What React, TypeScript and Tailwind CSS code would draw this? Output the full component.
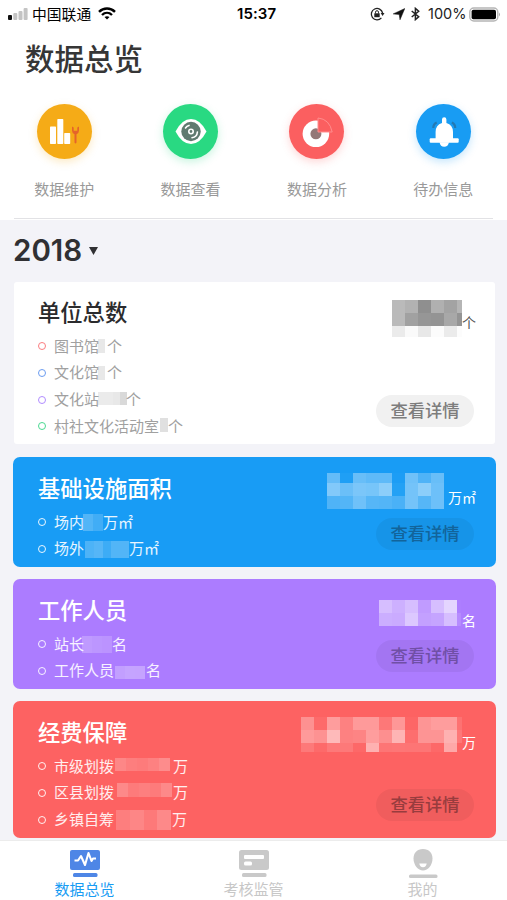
import type { ReactNode } from "react";

type Censor = {
  cells: number[][];
  cols: number[];
  rows: number[];
};

type Item = {
  label: string;
  unit: string;
  before: number;
  after: number;
  top?: number;
  mask: Censor;
};

type Card = {
  title: string;
  unit: string;
  height: string;
  box: string;
  titleColor: string;
  textColor: string;
  unitColor: string;
  button: string;
  side: string;
  dots: string[];
  maskTop: number;
  maskRight: number;
  unitTop: number;
  mask: Censor;
  items: Item[];
};

const row = (cells: number[], width: number, height: number): Censor => ({
  cells: [cells],
  cols: cells.map(() => width / cells.length),
  rows: [height],
});

const cards: Card[] = [
  {
    title: "单位总数",
    unit: "个",
    height: "h-[162px] mb-[13px]",
    box: "mx-[14px] w-[481px] rounded-[3px] bg-white pl-6 pt-[13px] text-black",
    titleColor: "text-[#2b2b2d]",
    textColor: "text-[#a0a0a0]",
    unitColor: "text-[#555]",
    button: "bg-[#f1f1f1] text-[#7d7d7d]",
    side: "-mt-[13px] pr-[19px]",
    dots: ["border-[#fb7d80]", "border-[#6b9cf0]", "border-[#b18cff]", "border-[#4bd992]"],
    maskTop: 18,
    maskRight: 0,
    unitTop: 30,
    mask: {
      cols: [13, 13, 13, 13, 13, 5],
      rows: [13, 13, 11],
      cells: [
        [0.27, 0.3, 0.44, 0.31, 0.36, 0.29],
        [0.27, 0.37, 0.41, 0.42, 0.34, 0.42],
        [0.08, 0.02, 0.09, 0.01, 0.08, 0.01],
      ],
    },
    items: [
      { label: "图书馆", unit: "个", before: -1, after: 2, mask: row([0.09], 7, 14) },
      { label: "文化馆", unit: "个", before: -1, after: 2, mask: row([0.09], 7, 14) },
      { label: "文化站", unit: "个", before: -1, after: -1, top: -1, mask: row([0.08, 0.08, 0.09, 0.15], 29, 13) },
      { label: "村社文化活动室", unit: "个", before: 1, after: 0, top: -1, mask: row([0.12], 8, 14) },
    ],
  },
  {
    title: "基础设施面积",
    unit: "万㎡",
    height: "h-[110px] mb-3",
    box: "mx-[13px] w-[483px] rounded-[7px] bg-[#189cf5] pl-[25px] pt-[14px] text-white",
    titleColor: "text-white",
    textColor: "text-white/90",
    unitColor: "text-white",
    button: "bg-black/5 text-[#12649b]",
    side: "-mt-[14px] pr-5",
    dots: ["border-white/90", "border-white/90"],
    maskTop: 16,
    maskRight: 4,
    unitTop: 30,
    mask: {
      cols: [13, 13, 13, 13, 13, 13, 13, 13, 13],
      rows: [10, 13, 13],
      cells: [
        [0.33, 0.03, 0.35, 0.31, 0.31, 0.02, 0.38, 0.24, 0.35],
        [0.46, 0.36, 0.43, 0.41, 0.5, 0.05, 0.4, 0.5, 0.37],
        [0.24, 0.26, 0.38, 0.27, 0.26, 0.22, 0.4, 0.27, 0.37],
      ],
    },
    items: [
      { label: "场内", unit: "万㎡", before: -1, after: 0, mask: row([0.25, 0.18], 20, 17) },
      { label: "场外", unit: "万㎡", before: 1, after: 0, mask: row([0.23, 0.27, 0.16, 0.25, 0.25], 44, 17) },
    ],
  },
  {
    title: "工作人员",
    unit: "名",
    height: "h-[110px] mb-3",
    box: "mx-[13px] w-[483px] rounded-[7px] bg-[#ac7cff] pl-[25px] pt-[14px] text-white",
    titleColor: "text-white",
    textColor: "text-white/90",
    unitColor: "text-white",
    button: "bg-black/5 text-[#704fa6]",
    side: "-mt-[14px] pr-5",
    dots: ["border-white/90", "border-white/90"],
    maskTop: 21,
    maskRight: 1,
    unitTop: 31,
    mask: {
      cols: [13, 13, 13, 13, 13, 13, 4],
      rows: [13, 13],
      cells: [
        [0.5, 0.4, 0.5, 0.24, 0.5, 0.68, 0.02],
        [0.38, 0.36, 0.58, 0.28, 0.31, 0.5, 0.12],
      ],
    },
    items: [
      { label: "站长", unit: "名", before: -2, after: 0, mask: row([0.23, 0.2, 0.18], 30, 17) },
      { label: "工作人员", unit: "名", before: 1, after: 1, top: 1, mask: row([0.27, 0.31, 0.3], 30, 13) },
    ],
  },
  {
    title: "经费保障",
    unit: "万",
    height: "h-[137px]",
    box: "mx-[13px] w-[483px] rounded-[7px] bg-[#fd6262] pl-[25px] pt-[14px] text-white",
    titleColor: "text-white",
    textColor: "text-white/90",
    unitColor: "text-white",
    button: "bg-black/5 text-[#983c3e]",
    side: "-mt-[14px] pr-5",
    dots: ["border-white/90", "border-white/90", "border-white/90"],
    maskTop: 16,
    maskRight: 0,
    unitTop: 31,
    mask: {
      cols: [13, 13, 13, 13, 13, 13, 13, 13, 13, 13, 13, 13, 5],
      rows: [13, 13, 9],
      cells: [
        [0.3, 0.05, 0.38, 0.2, 0.36, 0.36, 0.14, 0.34, 0.03, 0.33, 0.38, 0.38, 0.1],
        [0.36, 0.31, 0.56, 0.2, 0.22, 0.38, 0.29, 0.52, 0.08, 0.32, 0.32, 0.5, 0.14],
        [0.15, 0.05, 0.15, 0.15, 0.04, 0.5, 0.12, 0.13, 0.12, 0.12, 0.04, 0.45, 0.01],
      ],
    },
    items: [
      { label: "市级划拨", unit: "万", before: 1, after: 3, top: -2, mask: row([0.24, 0.18, 0.16, 0.2, 0.27], 55, 13) },
      { label: "区县划拨", unit: "万", before: 3, after: 1, top: -3, mask: row([0.25, 0.16, 0.19, 0.16, 0.25], 55, 14) },
      { label: "乡镇自筹", unit: "万", before: 2, after: 1, mask: row([0.18, 0.23, 0.15, 0.25], 55, 20) },
    ],
  },
];

// pixelated block that hides a figure
function Mosaic({ mask }: { mask: Censor }) {
  return (
    <div
      className="grid shrink-0"
      style={{
        gridTemplateColumns: mask.cols.map((c) => `${c}px`).join(" "),
        gridTemplateRows: mask.rows.map((r) => `${r}px`).join(" "),
      }}
    >
      {mask.cells.flat().map((opacity, i) => (
        <span key={i} style={{ opacity }} className="bg-current" />
      ))}
    </div>
  );
}

function StatusBar() {
  return (
    <div className="flex h-7 items-center pl-2 pr-[6px] text-black">
      <div className="flex w-[229px] items-center">
        <svg width="20" height="12" viewBox="0 0 20 12">
          <rect x="0" y="7" width="4" height="5" rx="1" fill="#111" />
          <rect x="5.3" y="5" width="4" height="7" rx="1" fill="#c4c4c4" />
          <rect x="10.5" y="3" width="4" height="9" rx="1" fill="#c4c4c4" />
          <rect x="15.6" y="0" width="4" height="12" rx="1" fill="#c4c4c4" />
        </svg>
        <span className="ml-1 text-[14.8px] leading-none">中国联通</span>
        <svg className="ml-[7px]" width="18" height="13" viewBox="0 0 18 13" fill="none" stroke="#000" strokeWidth="2.4">
          <path d="M1 4.8C5.5.3 12.5.3 17 4.8" />
          <path d="M4 8C6.9 5.2 11.1 5.2 14 8" />
          <path d="M6.5 10Q9 8.3 11.5 10L9 12.5Z" fill="#000" stroke="none" />
        </svg>
      </div>
      <span className="-mt-px w-10 font-['Inter'] text-[15px] font-semibold leading-none tracking-[0.1px]">15:37</span>
      <div className="ml-auto flex items-center">
        <svg width="15" height="14" viewBox="0 0 15 14" fill="none" stroke="#222" strokeWidth="1.3">
          <path d="M11.4 10.8A5.7 5.7 0 1 1 12.6 6" />
          <path d="M10.7 6h3.8l-1.9 3z" fill="#222" stroke="none" />
          <rect x="4.3" y="6.3" width="5.4" height="3.9" fill="#222" stroke="none" />
          <path d="M5.5 6.5V5.2a1.5 1.5 0 0 1 3 0V6.5" strokeWidth="1" />
        </svg>
        <svg className="ml-2" width="12" height="12" viewBox="0 0 12 12">
          <path d="M11.8.5 7 11.8 6.2 6.4.2 5.9Z" fill="#111" stroke="#111" strokeWidth=".5" />
        </svg>
        <svg className="ml-[6px]" width="9" height="14" viewBox="0 0 9 14" fill="none" stroke="#222" strokeWidth="1.5">
          <path d="M.7 4 7.7 9.7 4.4 12.6V1.4L7.7 4.3.7 10" />
        </svg>
        <span className="ml-2 w-[39px] whitespace-nowrap font-['Inter'] text-[14.5px] leading-none text-[#222]">100%</span>
        <svg className="ml-[2px]" width="32" height="15" viewBox="0 0 32 15">
          <rect x=".8" y="1" width="28" height="13" rx="4" fill="#fff" stroke="#b5b5b5" strokeWidth="1.4" />
          <rect x="2.6" y="2.8" width="24.4" height="9.4" rx="1.8" fill="#000" />
          <path d="M30 5.5q2 2 0 4z" fill="#aaa" />
        </svg>
      </div>
    </div>
  );
}

function Shortcut({ label, color, children }: { label: string; color: string; children: ReactNode }) {
  return (
    <div className="flex w-[126.4px] flex-col items-center">
      <div className={`size-[55px] rounded-full ${color}`}>
        <svg width="55" height="55" viewBox="0 0 55 55">{children}</svg>
      </div>
      <span className="mt-[19px] text-[15px] leading-[22px] text-[#999]">{label}</span>
    </div>
  );
}

function Shortcuts() {
  return (
    <div className="flex pl-px pt-[23px]">
      <Shortcut label="数据维护" color="bg-[#f5ab17] shadow-[0_3px_8px_#f5ab1740]">
        <g fill="#fff">
          <rect x="13" y="22.5" width="6" height="17.5" rx=".7" />
          <rect x="20.3" y="15" width="6" height="25" rx=".7" />
          <rect x="27.2" y="29" width="6" height="11" rx=".7" />
        </g>
        <path
          d="M35 22.5v4q0 2.800 2.500 3.700V38.500q1 1.800 2 0V30.200Q42 29.300 42 26.500V22.500L40.300 23.500v3.300h-3.600v-3.300z"
          fill="#e5642a"
        />
      </Shortcut>
      <Shortcut label="数据查看" color="bg-[#29d982] shadow-[0_3px_8px_#29d98240]">
        <path d="M12.5 27.5Q19 15 28 15T43.5 27.5Q37 40 28 40T12.5 27.5Z" fill="#fff" />
        <circle cx="28" cy="27.5" r="9.7" fill="#607a70" />
        <circle cx="28" cy="27.5" r="2.2" fill="none" stroke="#fff" strokeWidth="1.6" />
        <g fill="none" stroke="#fff" strokeWidth="1.6" strokeLinecap="round">
          <path d="M22.5 24A6.5 6.5 0 0 1 26 21.4" />
          <path d="M34.4 28A6.3 6.3 0 0 1 29 33.7" />
        </g>
      </Shortcut>
      <Shortcut label="数据分析" color="bg-[#fb5f60] shadow-[0_3px_8px_#fb5f6040]">
        <circle cx="26.9" cy="29.8" r="13.3" fill="#fff" />
        <circle cx="26.9" cy="29.8" r="5.5" fill="#937878" />
        <path d="M29 28V14Q40.5 15 43.2 28Z" fill="#fb5f60" stroke="#ff8d8d" strokeWidth="1" strokeLinejoin="round" />
      </Shortcut>
      <Shortcut label="待办信息" color="bg-[#189cf3] shadow-[0_3px_8px_#189cf340]">
        <g fill="none" stroke="#2379b3" strokeWidth="2.2">
          <path d="M17.3 24q0-4 3.4-5.5" />
          <path d="M39.2 24q0-4-3.4-5.5" />
        </g>
        <g fill="#fff">
          <path d="M26 19v-3.500a2.200 2.200 0 0 1 4.400 0V19q6.600 2 6.600 9v7.500H19.600V28q0-7 6.400-9Z" />
          <rect x="13.7" y="34.3" width="29" height="4.4" rx="1" />
          <path d="M23.5 38.3h9.500q-1 4.500-4.800 4.500t-4.700-4.500Z" />
        </g>
      </Shortcut>
    </div>
  );
}

function StatCard({ card }: { card: Card }) {
  return (
    <section className={`flex justify-between ${card.height} ${card.box}`}>
      <div>
        <h2 className={`text-[22.3px] font-medium leading-8 ${card.titleColor}`}>{card.title}</h2>
        <ul className="pt-[6px]">
          {card.items.map((item, i) => (
            <li key={item.label} className="flex h-[26.7px] items-center text-[15px]">
              <span className={`mr-2 size-2 rounded-full border-[1.5px] ${card.dots[i]}`} />
              <span className={`-mt-px ${card.textColor}`}>{item.label}</span>
              <div
                className="relative"
                style={{ marginLeft: item.before, marginRight: item.after, top: item.top ?? 0 }}
              >
                <Mosaic mask={item.mask} />
              </div>
              <span className={`-mt-px ${card.textColor}`}>{item.unit}</span>
            </li>
          ))}
        </ul>
      </div>
      <div className={`flex flex-col items-end justify-between pb-[17px] ${card.side}`}>
        <div className="flex h-[42px] items-start">
          <div style={{ marginTop: card.maskTop, marginRight: card.maskRight }}>
            <Mosaic mask={card.mask} />
          </div>
          <span className={`text-[14px] leading-5 ${card.unitColor}`} style={{ marginTop: card.unitTop }}>
            {card.unit}
          </span>
        </div>
        <button
          className={`mr-[2px] h-8 w-[98px] rounded-full pb-[2px] text-[17.3px] font-medium leading-[30px] ${card.button}`}
        >
          查看详情
        </button>
      </div>
    </section>
  );
}

function TabBar() {
  return (
    <nav className="flex h-[60px] shrink-0 border-t border-[#ececec] bg-white text-[15px] leading-5 text-[#c7c7c7]">
      <div className="flex w-1/3 flex-col items-center pt-2 text-[#189cf3]">
        <svg width="30" height="29" viewBox="0 0 30 29">
          <rect x="0" y="1" width="30" height="20" rx="2" fill="#4e86e6" />
          <rect x="3" y="24" width="24.5" height="4" rx="1.5" fill="#4e86e6" />
          <path
            d="M4.5 11.5H8L11 7l4 9 3.500-12 3 8 1.500-2.500h3"
            fill="none"
            stroke="#fff"
            strokeWidth="2.1"
            strokeLinejoin="round"
          />
        </svg>
        <span className="mt-px">数据总览</span>
      </div>
      <div className="flex w-1/3 flex-col items-center pt-2">
        <svg width="30" height="29" viewBox="0 0 30 29">
          <rect x="0" y="1" width="30" height="20" rx="2.5" fill="#c9c9c9" />
          <rect x="5" y="6" width="20" height="4" rx="1" fill="#fff" />
          <rect x="5" y="12.5" width="8" height="4" rx="1.5" fill="#fff" />
          <rect x="3" y="24" width="24.5" height="4" rx="1.5" fill="#c9c9c9" />
        </svg>
        <span className="mt-px">考核监管</span>
      </div>
      <div className="flex w-1/3 flex-col items-center pt-2">
        <svg width="30" height="29" viewBox="0 0 30 29">
          <path d="M15 0c6 0 9.500 4 9.500 9.500C24.500 16 20 21.500 15 21.500S5.500 16 5.500 9.500C5.500 4 9 0 15 0Z" fill="#c9c9c9" />
          <path d="M11.3 14.5h7.400q-.5 3.700-3.700 3.700t-3.700-3.700Z" fill="#fff" />
          <rect x="1" y="25.5" width="28.5" height="3.5" rx="1.5" fill="#c9c9c9" />
        </svg>
        <span className="mt-px">我的</span>
      </div>
    </nav>
  );
}

export default function App() {
  return (
    <div className="flex h-[900px] w-[507px] flex-col overflow-hidden bg-[#f3f3f8] font-['Noto_Sans_CJK_SC',sans-serif]">
      <header className="h-[220px] shrink-0 bg-white">
        <StatusBar />
        <h1 className="h-[53px] pl-[25px] pt-[9px] text-[29.5px] font-medium leading-10 text-[#363636]">数据总览</h1>
        <Shortcuts />
        <div className="mx-[14px] mt-[18px] h-px bg-[#e2e2e5]" />
      </header>

      <main className="min-h-0 flex-1 overflow-hidden">
        <div className="flex h-[62px] items-center pb-px pl-[13px] text-[#303033]">
          <span className="font-['Inter'] text-[29.5px] font-semibold leading-none">2018</span>
          <svg className="ml-[7px]" width="9" height="8" viewBox="0 0 9 8">
            <path d="M0 0h9L4.5 8Z" fill="currentColor" />
          </svg>
        </div>
        {cards.map((card) => (
          <StatCard key={card.title} card={card} />
        ))}
      </main>

      <TabBar />
    </div>
  );
}
